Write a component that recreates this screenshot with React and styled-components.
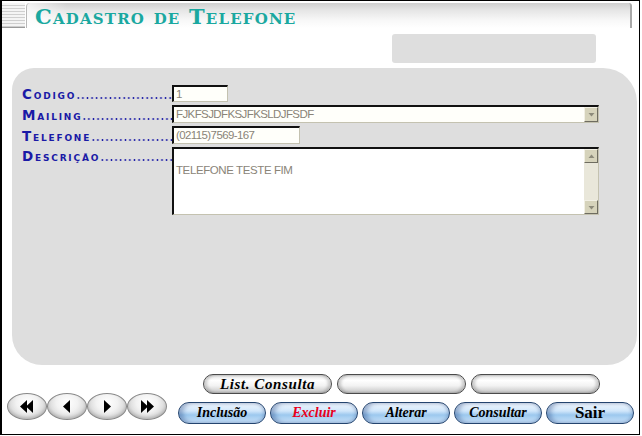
import React from 'react';
import styled, { createGlobalStyle } from 'styled-components';

const Global = createGlobalStyle`
  html, body { margin: 0; padding: 0; background: #fff; }
  body { width: 642px; height: 436px; overflow: hidden; font-family: "Liberation Sans", Arial, sans-serif; }
`;

export default function App() {
  return (
    <>
      <Global />
      <Frame>
        <Header>
          <LinedIcon />
          <TitleBar>
            <Title>Cadastro de Telefone</Title>
          </TitleBar>
        </Header>

        <InfoBox />

        <Panel>
          <Form>
            <Label>
              <LabelText>Codigo</LabelText>
              <Leader />
            </Label>
            <Field width={56} height={17}>1</Field>

            <Label>
              <LabelText>Mailing</LabelText>
              <Leader />
            </Label>
            <Field width={427} height={18}>
              FJKFSJDFKSJFKSLDJFSDF
              <DropButton><Arrow dir="down" /></DropButton>
            </Field>

            <Label>
              <LabelText>Telefone</LabelText>
              <Leader />
            </Label>
            <Field width={128} height={18}>(02115)7569-167</Field>

            <Label top>
              <LabelText>Descrição</LabelText>
              <Leader />
            </Label>
            <Memo>
              <MemoText>TELEFONE TESTE FIM</MemoText>
              <ScrollBar>
                <ScrollButton><Arrow dir="up" /></ScrollButton>
                <ScrollButton><Arrow dir="down" /></ScrollButton>
              </ScrollBar>
            </Memo>
          </Form>
        </Panel>

        <Footer>
          <NavGroup>
            {navs.map((n) => (
              <NavButton key={n}>
                <NavIcon kind={n} />
              </NavButton>
            ))}
          </NavGroup>
          <Actions>
            <ActionRow indent={25} gap={5}>
              <SilverPill>List. Consulta</SilverPill>
              <SilverPill />
              <SilverPill />
            </ActionRow>
            <ActionRow gap={4}>
              {actions.map((a) => (
                <BluePill key={a.text} color={a.color} plain={a.plain}>
                  {a.text}
                </BluePill>
              ))}
            </ActionRow>
          </Actions>
        </Footer>
      </Frame>
    </>
  );
}

function Arrow({ dir }) {
  return (
    <svg width="7" height="5" viewBox="0 0 7 5">
      {dir === 'down' ? (
        <polygon points="0.5,1 6.5,1 3.5,4.5" fill="#8c8a7a" />
      ) : (
        <polygon points="0.5,4 6.5,4 3.5,0.5" fill="#8c8a7a" />
      )}
    </svg>
  );
}

function NavIcon({ kind }) {
  const left = 'M0,6.5 L7,0 L7,13 Z';
  const right = 'M7,6.5 L0,0 L0,13 Z';
  return (
    <svg width="16" height="13" viewBox="0 0 16 13">
      {kind === 'first' && (
        <>
          <path d={left} transform="translate(1,0)" fill="#000" />
          <path d={left} transform="translate(7,0)" fill="#000" />
        </>
      )}
      {kind === 'prev' && <path d={left} transform="translate(4,0)" fill="#000" />}
      {kind === 'next' && <path d={right} transform="translate(5,0)" fill="#000" />}
      {kind === 'last' && (
        <>
          <path d={right} transform="translate(2,0)" fill="#000" />
          <path d={right} transform="translate(8,0)" fill="#000" />
        </>
      )}
    </svg>
  );
}

const navs = ['first', 'prev', 'next', 'last'];

const actions = [
  { text: 'Inclusão' },
  { text: 'Excluir', color: '#e8001c' },
  { text: 'Alterar' },
  { text: 'Consultar' },
  { text: 'Sair', plain: true },
];

const Frame = styled.div`
  box-sizing: border-box;
  width: 640px;
  height: 435px;
  border: 1px solid #000;
  border-left-width: 2px;
  display: flex;
  flex-direction: column;
`;

const Header = styled.div`
  display: flex;
  height: 25px;
  margin-top: 2px;
`;

const LinedIcon = styled.div`
  width: 23px;
  height: 25px;
  box-sizing: border-box;
  border-bottom: 1px solid #9a9a9a;
  background: repeating-linear-gradient(
    to bottom,
    #f4f4f4 0px,
    #f4f4f4 2px,
    #cfcfcf 2px,
    #cfcfcf 3px
  );
`;

const TitleBar = styled.div`
  box-sizing: border-box;
  width: 606px;
  margin-left: 1px;
  display: flex;
  align-items: center;
  padding-left: 8px;
  border-top-left-radius: 4px;
  border-top-right-radius: 3px;
  border-left: 1px solid #b8b8b8;
  border-right: 2px solid #a8a8a8;
  background:
    linear-gradient(to right, rgba(255, 255, 255, 0.7), rgba(255, 255, 255, 0) 40px),
    linear-gradient(to bottom, #cfcfcf 0%, #e6e6e6 30%, #f8f8f8 70%, #ffffff 100%);
`;

const Title = styled.span`
  font-family: "DejaVu Serif", "Liberation Serif", serif;
  font-weight: bold;
  font-variant: small-caps;
  font-size: 21px;
  letter-spacing: 1.2px;
  color: #1aa8a0;
  line-height: 1;
  margin-top: 1px;
`;

const InfoBox = styled.div`
  width: 204px;
  height: 29px;
  margin: 6px 0 0 390px;
  background: #dedede;
  border-radius: 3px;
`;

const Panel = styled.div`
  box-sizing: border-box;
  width: 625px;
  height: 297px;
  margin: 5px 0 0 10px;
  padding: 17px 0 0 10px;
  background: #dedede;
  border-radius: 22px 34px 30px 30px;
`;

const Form = styled.div`
  display: grid;
  grid-template-columns: 150px auto;
  row-gap: 3px;
  justify-items: start;
`;

const Label = styled.div`
  width: 150px;
  display: flex;
  align-items: flex-end;
  align-self: ${(p) => (p.top ? 'start' : 'end')};
  height: ${(p) => (p.top ? '16px' : 'auto')};
  margin-bottom: ${(p) => (p.top ? '0' : '1px')};
`;

const LabelText = styled.span`
  white-space: nowrap;
  font-family: "DejaVu Sans", "Liberation Sans", sans-serif;
  font-weight: bold;
  font-variant: small-caps;
  font-size: 13.5px;
  letter-spacing: 1.8px;
  line-height: 14px;
  color: #1a1aa6;
`;

const Leader = styled.span`
  flex: 1;
  height: 2px;
  margin: 0 0 2px 0;
  background-image: radial-gradient(circle, #1a1aa6 0.9px, transparent 1.1px);
  background-size: 4.6px 2px;
`;

const Field = styled.div`
  position: relative;
  box-sizing: border-box;
  width: ${(p) => p.width}px;
  height: ${(p) => p.height}px;
  padding: 0 0 0 2px;
  border-top: 2px solid #111;
  border-left: 2px solid #111;
  border-right: 1px solid #c4c2b0;
  border-bottom: 1px solid #c4c2b0;
  background: #fffffa;
  color: #8a8478;
  font-family: "Liberation Sans", Arial, sans-serif;
  font-size: 11.5px;
  letter-spacing: -0.6px;
  line-height: 14px;
  white-space: nowrap;
`;

const DropButton = styled.div`
  position: absolute;
  right: 0;
  top: 0;
  bottom: 0;
  width: 14px;
  box-sizing: border-box;
  display: flex;
  align-items: center;
  justify-content: center;
  background: #d6d3bb;
  border: 1px solid #f2f0e4;
  border-right-color: #6e6c60;
  border-bottom-color: #6e6c60;
`;

const Memo = styled.div`
  box-sizing: border-box;
  width: 427px;
  height: 68px;
  display: flex;
  border-top: 2px solid #111;
  border-left: 2px solid #111;
  border-right: 1px solid #c4c2b0;
  border-bottom: 1px solid #c4c2b0;
  background: #fff;
`;

const MemoText = styled.div`
  flex: 1;
  padding: 14px 0 0 2px;
  color: #8a8478;
  font-family: "Liberation Sans", Arial, sans-serif;
  font-size: 11.5px;
  letter-spacing: -0.4px;
  line-height: 14px;
`;

const ScrollBar = styled.div`
  width: 14px;
  display: flex;
  flex-direction: column;
  justify-content: space-between;
  background: #e9e7da;
`;

const ScrollButton = styled.div`
  box-sizing: border-box;
  height: 14px;
  display: flex;
  align-items: center;
  justify-content: center;
  background: #d6d3bb;
  border: 1px solid #f2f0e4;
  border-right-color: #6e6c60;
  border-bottom-color: #6e6c60;
`;

const Footer = styled.div`
  display: flex;
  margin-top: 9px;
`;

const NavGroup = styled.div`
  display: flex;
  margin: 19px 0 0 5px;
`;

const NavButton = styled.div`
  box-sizing: border-box;
  width: 40px;
  height: 27px;
  display: flex;
  align-items: center;
  justify-content: center;
  border-radius: 50%;
  border: 1px solid #8a8a8a;
  background: radial-gradient(
    ellipse at 50% 35%,
    #ffffff 0%,
    #f2f2f2 40%,
    #d6d6d6 72%,
    #a8a8a8 100%
  );
  box-shadow: inset 0 -2px 3px rgba(0, 0, 0, 0.15);
`;

const Actions = styled.div`
  display: flex;
  flex-direction: column;
  gap: 8px;
  margin-left: 11px;
`;

const ActionRow = styled.div`
  display: flex;
  gap: ${(p) => p.gap}px;
  padding-left: ${(p) => p.indent || 0}px;
`;

const SilverPill = styled.div`
  box-sizing: border-box;
  width: 129px;
  height: 20px;
  display: flex;
  align-items: center;
  justify-content: center;
  border-radius: 10px;
  border: 1px solid #4a4a4a;
  background: linear-gradient(
    to bottom,
    #e4e4e4 0%,
    #ffffff 30%,
    #f2f2f2 60%,
    #c4c4c4 100%
  );
  box-shadow: inset 3px 0 3px rgba(0, 0, 0, 0.18), inset -3px 0 3px rgba(0, 0, 0, 0.18);
  font-family: "Liberation Serif", "Times New Roman", serif;
  font-style: italic;
  font-weight: bold;
  font-size: 15px;
  letter-spacing: 0.6px;
  color: #000;
`;

const BluePill = styled.div`
  box-sizing: border-box;
  width: 88px;
  height: 22px;
  display: flex;
  align-items: center;
  justify-content: center;
  border-radius: 11px;
  border: 1px solid #24446e;
  background: linear-gradient(
    to bottom,
    #f2f8fe 0%,
    #d0e6fa 40%,
    #9cc8ee 60%,
    #cce4fb 100%
  );
  box-shadow: inset 4px 0 4px rgba(30, 60, 120, 0.35), inset -2px 0 3px rgba(30, 60, 120, 0.2);
  font-family: "Liberation Serif", "Times New Roman", serif;
  font-style: ${(p) => (p.plain ? 'normal' : 'italic')};
  font-weight: bold;
  font-size: ${(p) => (p.plain ? 17 : 14)}px;
  color: ${(p) => p.color || '#000'};
`;
